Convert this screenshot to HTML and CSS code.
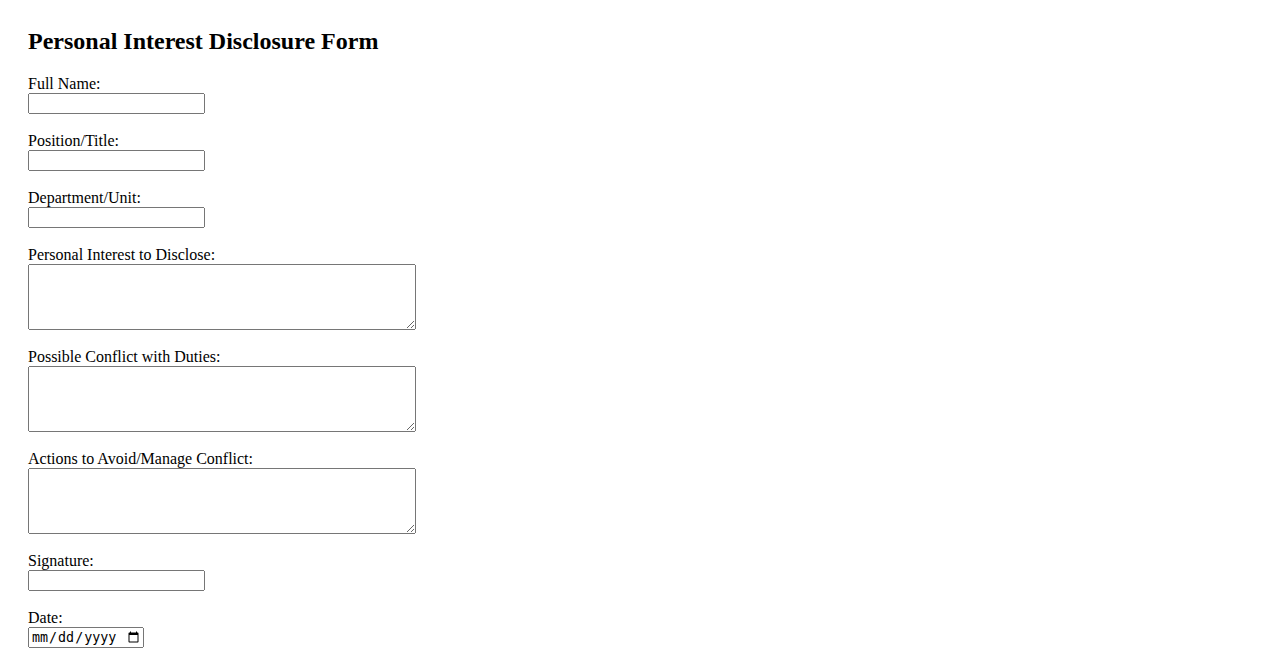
FILE: index.html
```html
<!DOCTYPE html>
<html>
<head>
<meta charset="utf-8">
<title>Personal Interest Disclosure Form</title>
<link rel="stylesheet" href="styles.css">
</head>
<body>
<div class="container">
<h2 class="title">Personal Interest Disclosure Form</h2>
<form class="form">
<div class="group"><label for="name">Full Name:</label><input class="field" type="text" id="name" name="name"></div>
<div class="group"><label for="position">Position/Title:</label><input class="field" type="text" id="position" name="position"></div>
<div class="group"><label for="dept">Department/Unit:</label><input class="field" type="text" id="dept" name="dept"></div>
<div class="group"><label for="interest">Personal Interest to Disclose:</label><textarea class="area" id="interest" name="interest" rows="4" cols="50"></textarea></div>
<div class="group"><label for="conflict">Possible Conflict with Duties:</label><textarea class="area" id="conflict" name="conflict" rows="4" cols="50"></textarea></div>
<div class="group"><label for="actions">Actions to Avoid/Manage Conflict:</label><textarea class="area" id="actions" name="actions" rows="4" cols="50"></textarea></div>
<div class="group"><label for="signature">Signature:</label><input class="field" type="text" id="signature" name="signature"></div>
<div class="group"><label for="date">Date:</label><input class="date" type="date" id="date" name="date"></div>
</form>
</div>
</body>
</html>
```
FILE: styles.css
```css
body {
  font-family: "Liberation Serif", "Times New Roman", serif;
}
.container {
  margin: 20px;
}
.group {
  margin-bottom: 18px;
}
.group label {
  display: block;
}
.field {
  display: block;
  box-sizing: border-box;
  width: 177px;
  height: 21px;
  margin: 0;
}
.area {
  display: block;
  box-sizing: border-box;
  width: 388px;
  height: 66px;
  margin: 0;
}
.date {
  display: block;
  box-sizing: border-box;
  width: 116px;
  height: 21px;
  margin: 0;
}
```
